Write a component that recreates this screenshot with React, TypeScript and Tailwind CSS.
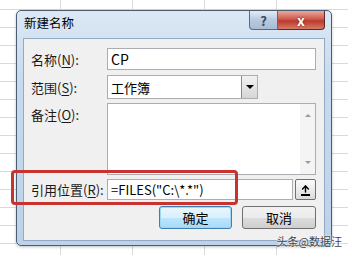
import { ArrowUp } from 'lucide-react';

const font = "font-['Noto_Sans_CJK_SC','Noto_Sans',sans-serif]";

function Label({ text, hot }: { text: string; hot: string }) {
  return (
    <div className="w-[83px] shrink-0 pl-[7px] text-[13px] leading-none text-[#1a1a1a]">
      {text}(<span className="underline underline-offset-2">{hot}</span>):
    </div>
  );
}

export default function App() {
  return (
    <div
      className={`relative w-[348px] h-[255px] overflow-hidden bg-white ${font} bg-[linear-gradient(to_right,#dadada_1px,transparent_1px),linear-gradient(to_bottom,#dadada_1px,transparent_1px)] bg-[size:72px_18px] bg-[position:60px_9px]`}
    >
      <div className="absolute left-0 top-0 w-full h-full flex">
        {/* dialog */}
        <div className="ml-[16px] mt-[10px] w-[316px] h-[236px] flex flex-col rounded-[5px] border border-[#4b5b70] bg-[linear-gradient(to_bottom,#dce8f5,#c7daee_30%,#bdd2ea)] shadow-[0_1px_3px_rgba(0,0,0,0.25)]">
          {/* title bar */}
          <div className="h-[27px] flex items-start">
            <div className="pl-[7px] pt-[6px] text-[12.5px] leading-none text-black">新建名称</div>
            <div className="ml-auto mr-[6px] flex">
              <div className="w-[29px] h-[19px] flex items-center justify-center rounded-bl-[4px] border border-t-0 border-[#5a6b80] bg-[linear-gradient(to_bottom,#e3ecf6,#b7c9de_50%,#a7bcd4)] text-[13px] font-bold leading-none text-[#3a4a5e]">
                ?
              </div>
              <div className="w-[47px] h-[19px] flex items-center justify-center rounded-br-[4px] border border-l-0 border-t-0 border-[#5a2a26] bg-[linear-gradient(to_bottom,#e9a99f,#cf5a4c_45%,#bb3a2c_55%,#d77a68)] text-[14px] font-bold leading-none text-white [text-shadow:0_0_2px_#4a1510]">
                x
              </div>
            </div>
          </div>
          {/* client area */}
          <div className="mx-[6px] mb-[4px] flex-1 flex flex-col border border-[#95a9c2] bg-[#f0f0f0] pt-[9px] pr-[8px]">
            <div className="h-[22px] flex items-center">
              <Label text="名称" hot="N" />
              <div className="flex-1 h-full flex items-center border border-[#abadb3] bg-white pl-[3px] text-[14px] leading-none text-black">
                CP
              </div>
            </div>
            <div className="mt-[5px] h-[24px] flex items-center">
              <Label text="范围" hot="S" />
              <div className="w-[151px] h-full flex border border-[#abadb3] bg-white">
                <div className="flex-1 flex items-center pl-[3px] text-[13px] leading-none text-black">工作簿</div>
                <div className="w-[16px] h-full flex items-center justify-center border-l border-[#8a8a8a] bg-[linear-gradient(to_bottom,#f2f2f2,#d6d6d6)]">
                  <div className="w-0 h-0 border-x-[4px] border-x-transparent border-t-[4px] border-t-black" />
                </div>
              </div>
            </div>
            <div className="mt-[4px] h-[72px] flex items-start">
              <div className="pt-[5px]">
                <Label text="备注" hot="O" />
              </div>
              <div className="flex-1 h-full flex justify-end border border-[#abadb3] bg-white">
                <div className="w-[15px] h-full flex flex-col items-center justify-between py-[10px] bg-[#f4f4f4]">
                  <div className="w-0 h-0 border-x-[3px] border-x-transparent border-b-[3px] border-b-[#9a9a9a]" />
                  <div className="w-0 h-0 border-x-[3px] border-x-transparent border-t-[3px] border-t-[#9a9a9a]" />
                </div>
              </div>
            </div>
            <div className="mt-[4px] h-[21px] flex items-center">
              <Label text="引用位置" hot="R" />
              <div className="flex-1 h-full flex items-center border border-[#abadb3] bg-white pl-[3px] text-[13px] leading-none text-black">
                =FILES("C:\*.*")
              </div>
              <div className="ml-[2px] w-[21px] h-[21px] flex items-center justify-center rounded-[2px] border border-[#707070] bg-[linear-gradient(to_bottom,#fafafa,#dcdcdc)]">
                <div className="flex flex-col items-center">
                  <ArrowUp className="w-[11px] h-[10px] text-black" strokeWidth={3.5} />
                  <div className="w-[9px] h-[2px] bg-black" />
                </div>
              </div>
            </div>
            <div className="mt-[6px] h-[23px] flex justify-end gap-[10px]">
              <div className="w-[73px] h-full flex items-center justify-center rounded-[3px] border border-[#3c7fb1] bg-[linear-gradient(to_bottom,#eaf6fd,#d9f0fc_50%,#bee6fd_51%,#a7d9f5)] shadow-[inset_0_0_0_1px_#9fd6f4] text-[13px] leading-none text-black">
                确定
              </div>
              <div className="w-[74px] h-full flex items-center justify-center rounded-[3px] border border-[#707070] bg-[linear-gradient(to_bottom,#f2f2f2,#ebebeb_50%,#dddddd_51%,#cfcfcf)] text-[13px] leading-none text-black">
                取消
              </div>
            </div>
          </div>
        </div>
      </div>
      {/* red annotation box */}
      <div className="absolute left-[11px] top-[170px] w-[227px] h-[35px] rounded-[4px] border-[3px] border-[#c8332f]" />
      {/* watermark */}
      <div className="absolute right-[6px] top-[236px] text-[11px] leading-none text-[#444] [text-shadow:0_0_2px_#fff,0_0_2px_#fff]">
        头条@数据汪
      </div>
    </div>
  );
}
